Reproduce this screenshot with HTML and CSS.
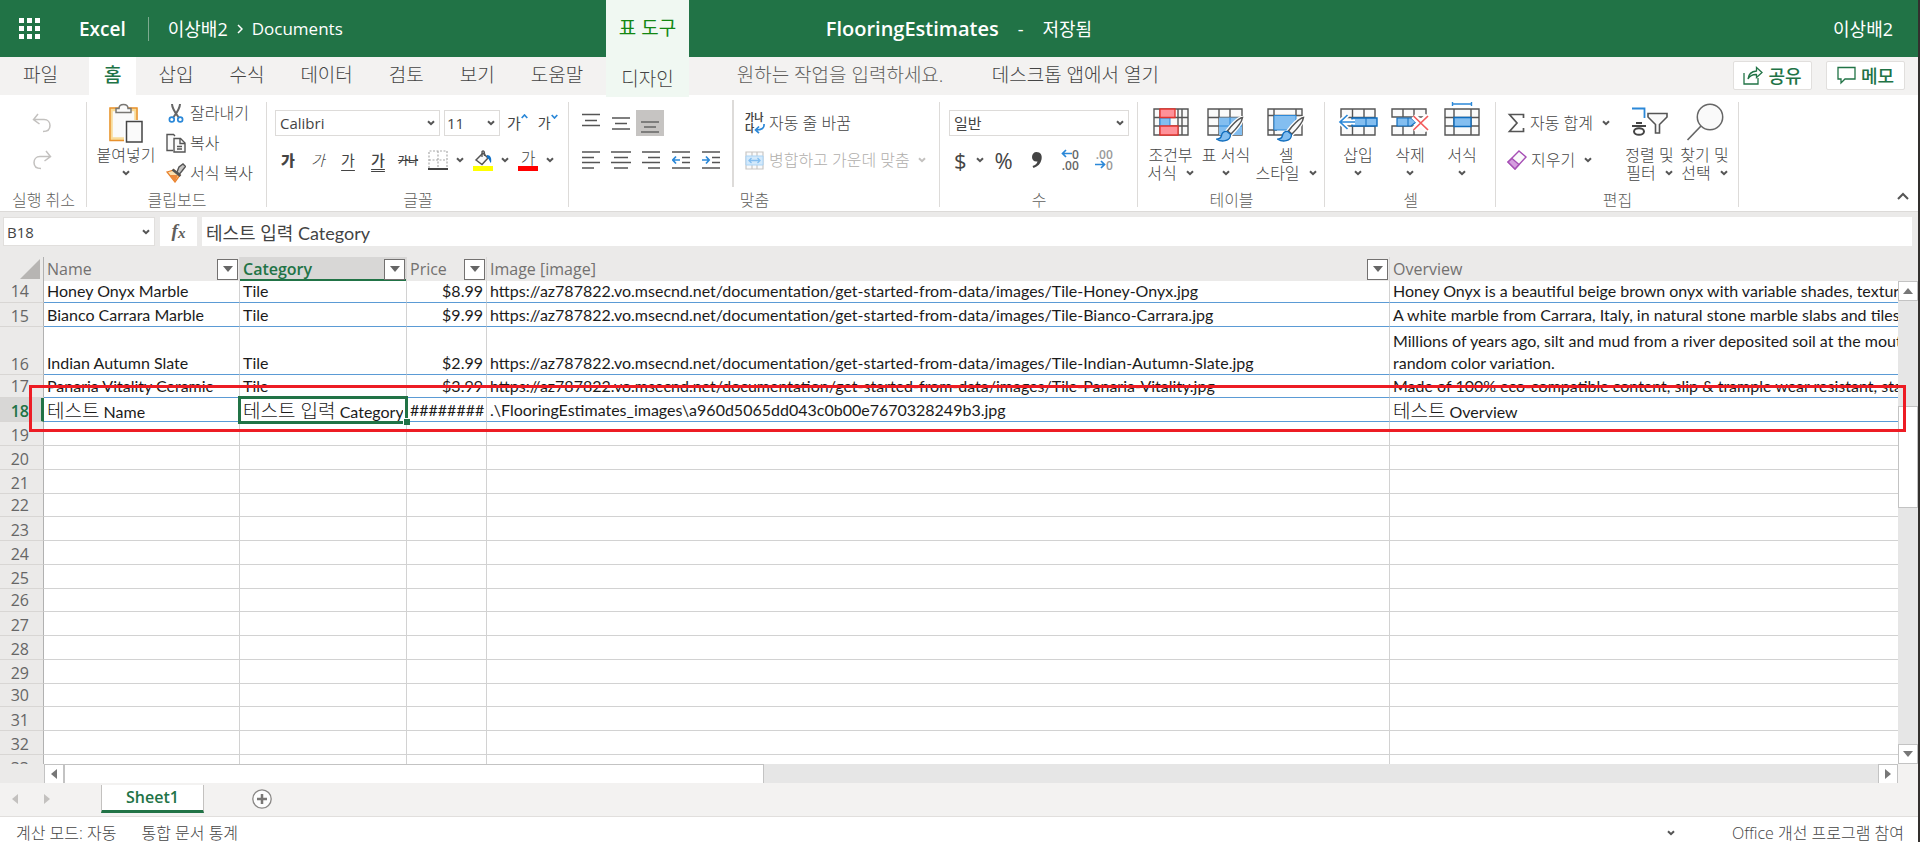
FILE: index.html
```html
<!DOCTYPE html>
<html lang="ko">
<head>
<meta charset="utf-8">
<title>FlooringEstimates - Excel</title>
<link rel="stylesheet" href="styles.css">
</head>
<body>
<svg class="defs" aria-hidden="true">
  <symbol id="chev" viewBox="0 0 8 6"><path d="M1 1.2 4 4.2 7 1.2" fill="none" stroke="currentColor" stroke-width="2"/></symbol>
  <symbol id="tri" viewBox="0 0 10 6"><path d="M0 0H10L5 6Z" fill="currentColor"/></symbol>
  <symbol id="brush" viewBox="0 0 28 26"><path d="M26.500 1.500C22 2.500 15 10 11.500 15L15 18C20 13 26 6 26.500 1.500Z" fill="#fafafa" stroke="#fff" stroke-width="4"/><path d="M26.500 1.500C22 2.500 15 10 11.500 15L15 18C20 13 26 6 26.500 1.500Z" fill="#fafafa" stroke="#555" stroke-width="1.500"/><path d="M11 15.500C7 15 6 17 5.500 19.500 5 22 3 23 .800 23.200 5 26 14.500 26 14.500 18.500Z" fill="#83bef0" stroke="#0f6cbd" stroke-width="1.300"/></symbol>
</svg>

<header class="topbar">
  <div class="brand">
    <button class="waffle" aria-label="앱 시작 관리자"><svg width="21" height="21" viewBox="0 0 21 21" fill="#fff"><path d="M0 0h5v5H0zM8 0h5v5H8zM16 0h5v5h-5zM0 8h5v5H0zM8 8h5v5H8zM16 8h5v5h-5zM0 16h5v5H0zM8 16h5v5H8zM16 16h5v5h-5z"/></svg></button>
    <a class="app" href="#">Excel</a>
    <nav class="crumbs"><a class="owner" href="#">이상배2</a><svg width="6" height="10" viewBox="0 0 6 10"><path d="M1 1 5 5 1 9" fill="none" stroke="#fff" stroke-width="1.500"/></svg><a href="#">Documents</a></nav>
  </div>
  <h1 class="title"><span>FlooringEstimates</span><small>-</small><small>저장됨</small></h1>
  <a class="user" href="#">이상배2</a>
</header>

<nav class="tabs">
  <button class="tab file">파일</button>
  <button class="tab home">홈</button>
  <button class="tab">삽입</button>
  <button class="tab">수식</button>
  <button class="tab">데이터</button>
  <button class="tab">검토</button>
  <button class="tab">보기</button>
  <button class="tab">도움말</button>
  <div class="context"><span class="context-title">표 도구</span><button class="tab">디자인</button></div>
  <input class="tellme" type="text" placeholder="원하는 작업을 입력하세요." aria-label="원하는 작업을 입력하세요.">
  <a class="desktop" href="#">데스크톱 앱에서 열기</a>
  <div class="actions">
    <button class="action"><svg width="20" height="19" viewBox="0 0 20 19" fill="none" stroke="#217346" stroke-width="1.300"><path d="M1 7V18H15V12M5 13C5.500 8 8 5.500 13.500 5V1.500L19 6.500 13.500 11.500V8.500C9.500 8.300 7 9.500 5 13Z"/></svg>공유</button>
    <button class="action"><svg width="19" height="19" viewBox="0 0 19 19" fill="none" stroke="#217346" stroke-width="1.300"><path d="M1 1.500H18V13H8L4 17V13H1Z"/></svg>메모</button>
  </div>
</nav>

<section class="ribbon">
  <div class="group undo">
    <div class="body stack">
      <button class="ico" aria-label="실행 취소"><svg width="20" height="20" viewBox="0 0 20 20" fill="none" stroke="#c3c1bf" stroke-width="1.500"><path d="M6 1 1.500 6.500 7.500 11M1.500 6.500H12C16 6.500 18 9.500 18 12.500 18 16 15.500 18.500 11 18.500"/></svg></button>
      <button class="ico" aria-label="다시 실행"><svg width="20" height="20" viewBox="0 0 20 20" fill="none" stroke="#c3c1bf" stroke-width="1.500"><path d="M14 1 18.500 6.500 12.500 11M18.500 6.500H8C4 6.500 2 9.500 2 12.500 2 16 4.500 18.500 9 18.500"/></svg></button>
    </div>
    <div class="caption">실행 취소</div>
  </div>

  <div class="group clip">
    <div class="body">
      <button class="big paste"><svg width="34" height="40" viewBox="0 0 34 40"><path d="M2 6.500H27V36H2Z" fill="#fafafa" stroke="#f8dc9a" stroke-width="3.500"/><path d="M1 5H28V37.500H1Z" fill="none" stroke="#e8912d" stroke-width="1.400"/><path d="M7 9.500V5.500H10C10 3 11.500 1.500 14.500 1.500S19 3 19 5.500H22V9.500Z" fill="#fafafa" stroke="#797774" stroke-width="1.500"/><path d="M15 17H34V40H15Z" fill="#fff"/><path d="M17.500 18.500H33V39H17.500Z" fill="#fafafa" stroke="#444" stroke-width="1.500"/></svg><span>붙여넣기</span><span><svg class="chev"><use href="#chev"/></svg></span></button>
      <div class="stack tight">
        <button class="row"><svg width="20" height="20" viewBox="0 0 20 20" fill="none"><path d="M6 1C6 5 8.500 9 12.800 14.500M14 1C14 5 11.500 9 7.200 14.500" stroke="#666" stroke-width="2"/><circle cx="5.800" cy="16.500" r="2.400" stroke="#2b88d8" stroke-width="1.700"/><circle cx="14.200" cy="16.500" r="2.400" stroke="#2b88d8" stroke-width="1.700"/></svg>잘라내기</button>
        <button class="row"><svg width="20" height="20" viewBox="0 0 20 20" fill="#fafafa" stroke="#555" stroke-width="1.400"><path d="M7 17.500H1V1.500H7.500L9 3"/><path d="M8 5.500H14.500L19 10V19H8Z"/><path d="M14 5.500V10.500H19M11 13.500H16M11 16H16" fill="none"/></svg>복사</button>
        <button class="row"><svg width="20" height="20" viewBox="0 0 20 20"><path d="M1 9 8 7 14 12 9 19Z" fill="#fce0b0" stroke="#e8822d" stroke-width="1.300"/><path d="M3 12H12L9 19Z" fill="#ed8a3c"/><path d="M6.500 6.500 14.500 13" stroke="#555" stroke-width="2.500"/><path d="M11 9 13 4 17 1 19.500 3.500 16 8 13.500 11Z" fill="#c8c6c4" stroke="#555" stroke-width="1.400"/></svg>서식 복사</button>
      </div>
    </div>
    <div class="caption">클립보드</div>
  </div>

  <div class="group font">
    <div class="body stack">
      <div class="line">
        <label class="combo name"><select aria-label="글꼴"><option>Calibri</option></select><svg class="chev"><use href="#chev"/></svg></label>
        <label class="combo size"><select aria-label="글꼴 크기"><option>11</option></select><svg class="chev"><use href="#chev"/></svg></label>
        <button class="glyph grow" aria-label="글꼴 크게">가<svg width="7" height="5" viewBox="0 0 7 5"><path d="M.700 4 3.500 1 6.300 4" fill="none" stroke="#2b88d8" stroke-width="1.700"/></svg></button>
        <button class="glyph shrink" aria-label="글꼴 작게">가<svg width="7" height="5" viewBox="0 0 7 5"><path d="M.700 1 3.500 4 6.300 1" fill="none" stroke="#2b88d8" stroke-width="1.700"/></svg></button>
      </div>
      <div class="line marks">
        <button class="glyph bold" aria-label="굵게">가</button>
        <button class="glyph italic" aria-label="기울임꼴">가</button>
        <button class="glyph under" aria-label="밑줄">가</button>
        <button class="glyph double" aria-label="이중 밑줄">가</button>
        <button class="glyph strike" aria-label="취소선">가나</button>
        <button class="drop" aria-label="테두리"><svg width="20" height="20" viewBox="0 0 20 20"><path d="M1 18V1H19V18M10 1V18M1 10H19" fill="none" stroke="#aaa" stroke-width="1.200" stroke-dasharray="2 1.500"/><path d="M0 19H20" stroke="#444" stroke-width="2"/></svg><svg class="chev"><use href="#chev"/></svg></button>
        <button class="drop" aria-label="채우기 색"><svg width="20" height="21" viewBox="0 0 20 21"><path d="M0 16H20V21H0Z" fill="#ff0"/><path d="M3 10 10 3 15 8 9 14.500Z" fill="#fafafa" stroke="#555" stroke-width="1.500"/><path d="M9 7V1.500C10 .500 11.500 1 11.500 3V6" fill="none" stroke="#555" stroke-width="1.300"/><path d="M14 5C17.500 5 19 8 18 13 16.500 12 16.500 9 14 7.500Z" fill="#1272c8"/></svg><svg class="chev"><use href="#chev"/></svg></button>
        <button class="drop" aria-label="글꼴 색"><span class="color">가</span><svg class="chev"><use href="#chev"/></svg></button>
      </div>
    </div>
    <div class="caption">글꼴</div>
  </div>

  <div class="group align">
    <div class="body">
      <div class="stack lines">
        <div class="line">
          <button class="ico" aria-label="위쪽 맞춤"><svg width="18" height="20" viewBox="0 0 18 20"><path d="M0 1.500H18M3 7.500H15M0 12.500H18" stroke="#555" stroke-width="1.600"/></svg></button>
          <button class="ico" aria-label="가운데 맞춤"><svg width="18" height="20" viewBox="0 0 18 20"><path d="M0 5H18M3 10.500H15M0 16H18" stroke="#555" stroke-width="1.600"/></svg></button>
          <button class="ico on" aria-label="아래쪽 맞춤"><svg width="18" height="20" viewBox="0 0 18 20"><path d="M0 9H18M3 14H15M0 19H18" stroke="#666" stroke-width="1.600"/></svg></button>
        </div>
        <div class="line">
          <button class="ico" aria-label="왼쪽 맞춤"><svg width="18" height="18" viewBox="0 0 18 18"><path d="M0 1H18M0 6.500H12M0 11.500H18M0 17H12" stroke="#555" stroke-width="1.600"/></svg></button>
          <button class="ico" aria-label="가운데"><svg width="20" height="18" viewBox="0 0 20 18"><path d="M0 1H20M3 6.500H17M0 11.500H20M3 17H17" stroke="#555" stroke-width="1.600"/></svg></button>
          <button class="ico" aria-label="오른쪽 맞춤"><svg width="18" height="18" viewBox="0 0 18 18"><path d="M0 1H18M6 6.500H18M0 11.500H18M6 17H18" stroke="#555" stroke-width="1.600"/></svg></button>
          <button class="ico" aria-label="내어쓰기"><svg width="18" height="18" viewBox="0 0 18 18"><path d="M0 1H18M10 6.500H18M10 11.500H18M0 17H18" stroke="#555" stroke-width="1.600"/><path d="M8 9H1M4 5.500.800 9 4 12.500" fill="none" stroke="#2b88d8" stroke-width="1.700"/></svg></button>
          <button class="ico" aria-label="들여쓰기"><svg width="18" height="18" viewBox="0 0 18 18"><path d="M0 1H18M10 6.500H18M10 11.500H18M0 17H18" stroke="#555" stroke-width="1.600"/><path d="M0 9H7M4 5.500 7.200 9 4 12.500" fill="none" stroke="#2b88d8" stroke-width="1.700"/></svg></button>
        </div>
      </div>
      <div class="stack wrap">
        <button class="row"><span class="wrapicon">가나<br>다<svg width="11" height="10" viewBox="0 0 11 10"><path d="M10 0C10.500 4 8 6 2 6M5 2.500 1.500 6 5 9.200" fill="none" stroke="#2b88d8" stroke-width="1.700"/></svg></span>자동 줄 바꿈</button>
        <button class="row off"><svg width="20" height="19" viewBox="0 0 20 19"><path d="M1 1H18V18H1ZM7 1V5M12 1V5M7 14V18M12 14V18" fill="#fafafa" stroke="#c8c6c4" stroke-width="1.200"/><path d="M1 5H18V14H1Z" fill="#d3e9fb" stroke="#a9d3f5"/><path d="M4 9.500H15M6.500 7 4 9.500 6.500 12M12.500 7 15 9.500 12.500 12" fill="none" stroke="#83bef0" stroke-width="1.300"/></svg>병합하고 가운데 맞춤<svg class="chev"><use href="#chev"/></svg></button>
      </div>
    </div>
    <div class="caption">맞춤</div>
  </div>

  <div class="group number">
    <div class="body stack">
      <label class="combo"><select aria-label="표시 형식"><option>일반</option></select><svg class="chev"><use href="#chev"/></svg></label>
      <div class="line">
        <button class="drop sym"><span>$</span><svg class="chev"><use href="#chev"/></svg></button>
        <button class="sym">%</button>
        <button class="ico" aria-label="쉼표 스타일"><svg width="12" height="19" viewBox="0 0 12 19"><path d="M5.500 1C9.500 1 11.500 4 10.500 8.500 9.800 12.500 7 15.500 2.500 17L1.500 15C4.500 14 6 12.500 6.500 10.500 3 11 1 9 1 6 1 3 3 1 5.500 1Z" fill="#444"/></svg></button>
        <button class="dec" aria-label="자릿수 늘림"><span><svg width="11" height="9" viewBox="0 0 11 9"><path d="M11 4.500H1.500M5 1 1.500 4.500 5 8" fill="none" stroke="#2b88d8" stroke-width="1.700"/></svg>0</span><span>.00</span></button>
        <button class="dec pale" aria-label="자릿수 줄임"><span>.00</span><span><svg width="11" height="9" viewBox="0 0 11 9"><path d="M0 4.500H9.500M6 1 9.500 4.500 6 8" fill="none" stroke="#2b88d8" stroke-width="1.700"/></svg>0</span></button>
      </div>
    </div>
    <div class="caption">수</div>
  </div>

  <div class="group table">
    <div class="body">
      <button class="big"><svg width="36" height="40" viewBox="0 0 36 40"><path d="M1 6H35V32H1ZM1 14.500H35M1 23H35M7 6V32M25 6V32M29 6V32" fill="#fafafa" stroke="#555" stroke-width="1.400"/><path d="M7 15H17V23H7Z" fill="#83bef0" stroke="#2b88d8"/><path d="M7 6H22V14.500H7ZM7 23H25V32H7Z" fill="#ff9199" stroke="#e3342f" stroke-width="1.300"/></svg><span>조건부</span><span>서식 <svg class="chev"><use href="#chev"/></svg></span></button>
      <button class="big"><svg width="38" height="40" viewBox="0 0 38 40"><path d="M1 6H35V32H1ZM1 14.500H35M1 23H35M12 6V32M23 6V32" fill="#fafafa" stroke="#555" stroke-width="1.400"/><path d="M12 14.500H35V32H12Z" fill="#83bef0"/><path d="M12 23H35M23 14.500V32" stroke="#2b88d8"/><svg x="9" y="13" width="28" height="26"><use href="#brush"/></svg></svg><span>표 서식</span><span><svg class="chev"><use href="#chev"/></svg></span></button>
      <button class="big"><svg width="38" height="40" viewBox="0 0 38 40"><path d="M1 6H35V32H1ZM1 12.500H35M7 6V32M29 6V13M1 27H10" fill="#fafafa" stroke="#555" stroke-width="1.400"/><path d="M7 12.500H29V27H7Z" fill="#83bef0" stroke="#2b88d8"/><svg x="10" y="13" width="28" height="26"><use href="#brush"/></svg></svg><span>셀</span><span>스타일 <svg class="chev"><use href="#chev"/></svg></span></button>
    </div>
    <div class="caption">테이블</div>
  </div>

  <div class="group cells">
    <div class="body">
      <button class="big"><svg width="40" height="40" viewBox="0 0 40 40"><path d="M3 6H37V32H3ZM3 14.500H37M3 23H37M14.500 6V32M26 6V32" fill="#fafafa" stroke="#555" stroke-width="1.400"/><path d="M14 15H39V23H14Z" fill="#83bef0" stroke="#0f6cbd" stroke-width="1.400"/><path d="M28 15V23" stroke="#0f6cbd"/><path d="M17 19H3M9.500 12 2 19 9.500 26" fill="none" stroke="#fff" stroke-width="5"/><path d="M17 19H2M9.500 12 2 19 9.500 26" fill="none" stroke="#2b88d8" stroke-width="1.700"/></svg><span>삽입</span><span><svg class="chev"><use href="#chev"/></svg></span></button>
      <button class="big"><svg width="38" height="40" viewBox="0 0 38 40"><path d="M1 6H35V14H1ZM1 23H35V32H1ZM12 6V14M23 6V14M12 23V32M23 23V32" fill="#fafafa" stroke="#555" stroke-width="1.400"/><path d="M6 15H20L25 19 20 23H6Z" fill="#83bef0" stroke="#0f6cbd" stroke-width="1.200"/><path d="M17 15V23" stroke="#0f6cbd"/><path d="M22.500 13 37 27M37 13 22.500 27" stroke="#fff" stroke-width="6"/><path d="M22.500 13 37 27M37 13 22.500 27" stroke="#f25a5a" stroke-width="1.700"/></svg><span>삭제</span><span><svg class="chev"><use href="#chev"/></svg></span></button>
      <button class="big"><svg width="36" height="40" viewBox="0 0 36 40"><path d="M1 6H35V32H1ZM1 14.500H35M1 23H35M10 6V32M27 6V32" fill="#fafafa" stroke="#555" stroke-width="1.400"/><path d="M10 14.500H27V23.500H10Z" fill="#83bef0" stroke="#0f6cbd" stroke-width="1.400"/><path d="M8.500 1H27.500M8.500-1V3M27.500-1V3" stroke="#2b88d8" stroke-width="1.400"/></svg><span>서식</span><span><svg class="chev"><use href="#chev"/></svg></span></button>
    </div>
    <div class="caption">셀</div>
  </div>

  <div class="group edit">
    <div class="body">
      <div class="stack sums">
        <button class="row"><svg width="19" height="20" viewBox="0 0 19 20"><path d="M16.500 5V1.500H2.500L10 10 2.500 18.500H16.500V15" fill="none" stroke="#555" stroke-width="1.700"/></svg>자동 합계<svg class="chev"><use href="#chev"/></svg></button>
        <button class="row"><svg width="20" height="20" viewBox="0 0 20 20"><path d="M12 1 19 7 8 19 1 12Z" fill="#fafafa" stroke="#a64fb5" stroke-width="1.400"/><path d="M5 8.500 12 14.500 8 19 1 12Z" fill="#d59ddf" stroke="#a64fb5" stroke-width="1.400"/></svg>지우기<svg class="chev"><use href="#chev"/></svg></button>
      </div>
      <button class="big"><svg width="38" height="40" viewBox="0 0 38 40" fill="none"><path d="M1 5.500H13.500V15" stroke="#2b88d8" stroke-width="1.800"/><path d="M5 20H11M1 23H15" stroke="#444" stroke-width="2"/><ellipse cx="8" cy="28.500" rx="5" ry="3.300" stroke="#444" stroke-width="2"/><path d="M17 10.500H36V14L28.500 21.500V30H24.500V21.500L17 14Z" fill="#fafafa" stroke="#555" stroke-width="1.600"/></svg><span>정렬 및</span><span>필터 <svg class="chev"><use href="#chev"/></svg></span></button>
      <button class="big"><svg width="38" height="40" viewBox="0 0 38 40"><circle cx="24" cy="14" r="12.700" fill="#fafafa" stroke="#666" stroke-width="1.500"/><path d="M15 23 1.500 37" stroke="#666" stroke-width="1.700"/></svg><span>찾기 및</span><span>선택 <svg class="chev"><use href="#chev"/></svg></span></button>
    </div>
    <div class="caption">편집</div>
  </div>
  <button class="collapse" aria-label="리본 축소"><svg width="12" height="8" viewBox="0 0 12 8"><path d="M1 7 6 2 11 7" fill="none" stroke="#555" stroke-width="2"/></svg></button>
</section>

<div class="formula">
  <label class="namebox"><input type="text" value="B18" aria-label="이름 상자"><svg class="chev"><use href="#chev"/></svg></label>
  <button class="fx">f<sub>x</sub></button>
  <input class="content" type="text" value="테스트 입력 Category" aria-label="수식 입력줄">
</div>

<main class="sheet">
  <div class="viewport">
    <table class="grid">
      <colgroup><col class="c-row"><col class="c-name"><col class="c-cat"><col class="c-price"><col class="c-img"><col></colgroup>
      <thead>
        <tr>
          <th class="corner"><svg width="20" height="20" viewBox="0 0 20 20"><path d="M20 0V20H0Z" fill="#b7b5b3"/></svg></th>
          <th><div>Name<button class="filter" aria-label="필터"><svg><use href="#tri"/></svg></button></div></th>
          <th class="sel"><div>Category<button class="filter" aria-label="필터"><svg><use href="#tri"/></svg></button></div></th>
          <th><div>Price<button class="filter" aria-label="필터"><svg><use href="#tri"/></svg></button></div></th>
          <th><div>Image [image]<button class="filter" aria-label="필터"><svg><use href="#tri"/></svg></button></div></th>
          <th><div>Overview</div></th>
        </tr>
      </thead>
      <tbody>
        <tr class="data short"><th>14</th><td>Honey Onyx Marble</td><td>Tile</td><td class="num">$8.99</td><td>https://az787822.vo.msecnd.net/documentation/get-started-from-data/images/Tile-Honey-Onyx.jpg</td><td>Honey Onyx is a beautiful beige brown onyx with variable shades, textures</td></tr>
        <tr class="data"><th>15</th><td>Bianco Carrara Marble</td><td>Tile</td><td class="num">$9.99</td><td>https://az787822.vo.msecnd.net/documentation/get-started-from-data/images/Tile-Bianco-Carrara.jpg</td><td>A white marble from Carrara, Italy, in natural stone marble slabs and tiles</td></tr>
        <tr class="data tall"><th>16</th><td>Indian Autumn Slate</td><td>Tile</td><td class="num">$2.99</td><td>https://az787822.vo.msecnd.net/documentation/get-started-from-data/images/Tile-Indian-Autumn-Slate.jpg</td><td>Millions of years ago, silt and mud from a river deposited soil at the mouth<br>random color variation.</td></tr>
        <tr class="data less"><th>17</th><td>Panaria Vitality Ceramic</td><td>Tile</td><td class="num">$3.99</td><td>https://az787822.vo.msecnd.net/documentation/get-started-from-data/images/Tile-Panaria-Vitality.jpg</td><td>Made of 100% eco-compatible content, slip &amp; trample wear resistant, stain</td></tr>
        <tr class="data current"><th>18</th><td class="ko"><div><b>테스트</b> Name</div></td><td class="ko active"><div><b>테스트 입력</b> Category</div></td><td class="num">########</td><td>.\FlooringEstimates_images\a960d5065dd043c0b00e7670328249b3.jpg</td><td class="ko"><div><b>테스트</b> Overview</div></td></tr>
        <tr><th>19</th><td></td><td></td><td></td><td></td><td></td></tr>
        <tr><th>20</th><td></td><td></td><td></td><td></td><td></td></tr>
        <tr><th>21</th><td></td><td></td><td></td><td></td><td></td></tr>
        <tr class="less"><th>22</th><td></td><td></td><td></td><td></td><td></td></tr>
        <tr><th>23</th><td></td><td></td><td></td><td></td><td></td></tr>
        <tr><th>24</th><td></td><td></td><td></td><td></td><td></td></tr>
        <tr><th>25</th><td></td><td></td><td></td><td></td><td></td></tr>
        <tr class="less"><th>26</th><td></td><td></td><td></td><td></td><td></td></tr>
        <tr><th>27</th><td></td><td></td><td></td><td></td><td></td></tr>
        <tr><th>28</th><td></td><td></td><td></td><td></td><td></td></tr>
        <tr><th>29</th><td></td><td></td><td></td><td></td><td></td></tr>
        <tr class="less"><th>30</th><td></td><td></td><td></td><td></td><td></td></tr>
        <tr><th>31</th><td></td><td></td><td></td><td></td><td></td></tr>
        <tr><th>32</th><td></td><td></td><td></td><td></td><td></td></tr>
        <tr><th>33</th><td></td><td></td><td></td><td></td><td></td></tr>
      </tbody>
    </table>
  </div>
  <div class="vscroll">
    <button aria-label="위로"><svg class="up"><use href="#tri"/></svg></button>
    <div class="vtrack"><div class="vthumb"></div></div>
    <button aria-label="아래로"><svg><use href="#tri"/></svg></button>
  </div>
  <div class="highlight"></div>
</main>

<div class="hscroll">
  <button aria-label="왼쪽으로"><svg class="left"><use href="#tri"/></svg></button>
  <div class="htrack"><div class="hthumb"></div></div>
  <button aria-label="오른쪽으로"><svg class="right"><use href="#tri"/></svg></button>
</div>

<nav class="sheets">
  <button class="nav" aria-label="이전 시트"><svg class="left"><use href="#tri"/></svg></button>
  <button class="nav" aria-label="다음 시트"><svg class="right"><use href="#tri"/></svg></button>
  <button class="sheet-tab">Sheet1</button>
  <button class="add" aria-label="새 시트"><svg width="20" height="20" viewBox="0 0 20 20"><circle cx="10" cy="10" r="9.200" fill="#fdfdfd" stroke="#8a8886" stroke-width="1.300"/><path d="M10 5V15M5 10H15" stroke="#797775" stroke-width="2.500"/></svg></button>
</nav>

<footer class="status">
  <span>계산 모드: 자동</span><span>통합 문서 통계</span>
  <svg class="chev"><use href="#chev"/></svg>
  <a href="#">Office 개선 프로그램 참여</a>
</footer>
</body>
</html>
```

FILE: styles.css
```css
* { box-sizing: border-box; }
body {
  margin: 0; min-height: 100vh; height: 100vh; display: flex; flex-direction: column; overflow: hidden;
  border-right: 2px solid #33302e; background: #fff; color: #444;
  font: 16px/18px "Open Sans", "Noto Sans CJK KR", sans-serif;
}
button, input, select { font: inherit; color: inherit; border: 0; margin: 0; padding: 0; background: none; border-radius: 0; }
button { white-space: nowrap; }
a { color: inherit; text-decoration: none; }
svg { display: block; flex: none; }
.defs { position: absolute; width: 0; height: 0; }
.chev { width: 8px; height: 6px; color: #555; }

.topbar { flex: none; height: 57px; display: grid; grid-template-columns: 1fr auto 1fr; align-items: center; background: #217346; color: #fff; font-size: 18px; line-height: 24px; }
.brand { display: flex; align-items: center; }
.waffle { margin: 0 39px 0 19px; }
.app { font-size: 19px; font-weight: 600; padding-right: 22px; border-right: 1px solid #7dab90; }
.crumbs { display: flex; align-items: center; gap: 9px; padding-left: 19px; font-size: 17px; }
.owner { font-size: 18px; }
.title { margin: 0; display: flex; gap: 19px; font-size: 20px; font-weight: 600; }
.title small { font-size: 18px; font-weight: 400; }
.user { justify-self: end; padding-right: 25px; font-size: 18px; }

.tabs { flex: none; height: 38px; display: flex; align-items: stretch; background: #f3f2f1; font-size: 19px; line-height: 26px; font-weight: 300; }
.tab { padding: 0 18px 2px; }
.tab.file { padding: 0 31px 2px 23px; }
.tab.home { padding: 0 15px 2px; margin-right: 4px; background: #fff; color: #217346; font-weight: 500; }
.context { position: relative; display: flex; margin: 0 0 -2px 5px; background: #f0f8f2; z-index: 1; }
.context .tab { padding: 4px 15px 0; }
.context-title { position: absolute; left: 0; right: 0; bottom: 100%; height: 57px; padding-top: 15px; text-align: center; background: #f0f8f2; color: #128712; font-weight: 400; font-size: 19px; }
.tellme { width: 230px; margin-left: 48px; padding-bottom: 2px; }
.tellme::placeholder { color: #605e5c; opacity: 1; }
.desktop { margin: 5px 0 0 25px; }
.actions { margin-left: auto; display: flex; gap: 14px; align-items: flex-start; padding: 4px 13px 0 0; }
.action { width: 79px; height: 29px; display: flex; align-items: center; justify-content: center; gap: 5px; background: #fff; border: 1px solid #e1dfdd; border-radius: 2px; color: #217346; font-size: 18px; font-weight: 500; }

.ribbon { flex: none; display: flex; border-bottom: 1px solid #dcdad8; height: 117px; font-weight: 300; }
.group { flex: none; position: relative; display: flex; flex-direction: column; }
.group::after { content: ""; position: absolute; right: 0; top: 7px; bottom: 4px; border-right: 1px solid #dddbd9; }
.body { display: flex; flex: 1; align-items: flex-start; }
.caption { height: 21px; line-height: 21px; text-align: center; color: #605e5c; }
.stack { display: flex; flex-direction: column; padding-top: 15px; gap: 11px; align-items: flex-start; }
.line { display: flex; align-items: center; height: 26px; }
.row { display: flex; align-items: center; gap: 4px; height: 26px; }
.stack.tight { padding-top: 3px; gap: 0; }
.tight .row { height: 30px; }
.ico { height: 26px; display: flex; align-items: center; justify-content: center; }
.big { display: flex; flex-direction: column; align-items: center; padding-top: 8px; }
.big > svg { margin-bottom: 3px; overflow: visible; }
.big span { height: 18px; display: flex; align-items: center; gap: 9px; }
.drop { display: flex; align-items: center; gap: 9px; }
.undo { width: 87px; }
.undo .ico { margin-right: 3px; }
.body.stack { align-items: stretch; }
.clip { width: 180px; }
.paste { width: 78px; margin-right: 1px; }
.font { width: 302px; }
.font .body { padding-left: 8px; }
.combo { position: relative; display: block; }
.combo select { width: 100%; height: 26px; padding: 0 4px; border: 1px solid #dddbd9; background: #fff; appearance: none; color: #444; font-weight: 400; font-size: 15px; }
.combo .chev { position: absolute; right: 5px; top: 10px; }
.combo.name { width: 165px; margin-right: 4px; }
.combo.size { width: 56px; margin-right: 7px; }
.combo.size select { padding: 0 2px; }
.glyph { display: flex; font-size: 15px; font-weight: 400; }
.grow { margin-right: 10px; }
.shrink { font-size: 14px; }
.marks { padding-left: 6px; }
.marks .glyph { justify-content: center; width: 30px; line-height: 19px; }
.marks .glyph:first-child { margin-left: -8px; }
.bold { font-weight: 900; }
.italic { font-style: italic; font-weight: 300; }
.under { text-decoration: underline; text-underline-offset: 4px; }
.double { text-decoration: underline double; text-underline-offset: 3px; font-weight: 500; }
.marks .strike { text-decoration: line-through; font-size: 11px; margin-right: 5px; font-weight: 500; }
.marks .drop { gap: 8px; margin-right: 9px; }
.color { width: 20px; height: 21px; line-height: 16px; border-bottom: 5px solid red; }
.align { width: 371px; }
.align .lines { padding-left: 7px; }
.align .ico { width: 30px; }
.align .ico.on { width: 28px; background: #c6c4c2; }
.wrap { padding-left: 11px; margin-left: 6px; border-left: 2px solid #dddbd9; height: 87px; margin-top: 5px; padding-top: 10px; }
.off { color: #b0aeac; }
.off .chev { color: #c3c1bf; margin-left: 4px; }
.wrapicon { width: 20px; font-size: 10px; line-height: 11px; font-weight: 700; text-align: left; position: relative; }
.wrapicon svg { position: absolute; right: 0; bottom: 0; }
.number { width: 198px; }
.number .body { padding: 15px 9px 0; }
.number .line { padding-left: 5px; }
.sym { font-size: 22px; font-weight: 400; line-height: 26px; }
.sym .chev { margin-right: 11px; }
.number .ico { margin: 0 16px 0 18px; }
.dec { display: flex; flex-direction: column; width: 20px; margin-right: 14px; font-size: 12px; line-height: 11px; font-weight: 600; align-items: flex-end; color: #666; }
.dec span { display: flex; }
.pale { color: #999; }
.table { width: 187px; }
.table .body { padding-left: 9px; }
.table .big { width: 47px; margin-right: 4px; }
.table .big + .big { width: 56px; margin-right: 2px; }
.table .big:last-child { width: 60px; }
.cells { width: 171px; }
.cells .body { padding-left: 7px; }
.cells .big { width: 52px; }
.edit { width: 243px; }
.edit .sums { width: 126px; padding-left: 11px; }
.edit .row .chev { margin-left: 5px; }
.edit .big { width: 55px; }
.collapse { margin: auto 9px 11px auto; }

.formula { flex: none; display: flex; gap: 5px; padding: 5px 6px 11px 3px; background: #ebeae9; height: 45px; }
.namebox { position: relative; width: 152px; }
.namebox input { width: 100%; height: 29px; background: #fff; padding-left: 3px; font-size: 15px; border: 1px solid #e1dfdd; }
.namebox .chev { position: absolute; right: 5px; top: 12px; }
.fx { width: 37px; background: #fff; font: italic bold 19px/24px "Liberation Serif", serif; color: #605e5c; }
.fx sub { font-size: 15px; vertical-align: -1px; }
.content { flex: 1; background: #fff; padding: 0 4px; font-size: 18px; font-family: Lato, "Noto Sans CJK KR", sans-serif; }

.sheet { flex: 1; min-height: 0; display: flex; position: relative; background: #ebeae9; }
.viewport { flex: 1; min-width: 0; overflow: hidden; }
.grid { width: 100%; table-layout: fixed; border-collapse: separate; border-spacing: 0; font: 16px/22px Lato, "Noto Sans CJK KR", sans-serif; color: #1b1b1b; }
.c-row { width: 44px; } .c-name { width: 196px; } .c-cat { width: 167px; } .c-price { width: 80px; } .c-img { width: 903px; }
.grid td { height: 24px; padding: 0 3px; background: #fff; border: solid #d2d2d2; border-width: 0 1px 1px 0; vertical-align: bottom; white-space: nowrap; overflow: hidden; }
.grid td:last-child { border-right: 0; }
.grid .data td { border-bottom-color: #5b9bd5; }
.grid tbody th { padding: 0 14px 0 0; font: 16px/20px "Open Sans", sans-serif; color: #666; vertical-align: bottom; border: solid #d8d6d4; border-width: 0 0 1px; border-right: 1px solid #b1b1b1; text-align: right; overflow: hidden; }
.grid thead th { padding: 0; height: 24px; text-align: left; font: 16px/22px "Open Sans", sans-serif; color: #737170; border-right: 1px solid #dbd9d8; }
.grid thead th:last-child { border-right: 0; }
.grid thead div { display: flex; justify-content: space-between; align-items: center; padding: 0 1px 0 3px; height: 24px; }
.grid thead th.corner { padding-left: 20px; border-right-color: #b1b1b1; }
.grid thead th.sel { background: #d8d7d6; color: #217346; font-weight: 600; box-shadow: inset 0 -2px #217346; }
.filter { width: 21px; height: 21px; display: flex; align-items: center; justify-content: center; background: #fff; border: 1px solid #737170; color: #666; }
.filter svg, .vscroll svg, .hscroll svg, .nav svg { width: 10px; height: 6px; }
.grid .num { text-align: right; }
.grid .short > * { height: 22px; line-height: 20px; padding-bottom: 1px; }
.grid .less > * { height: 23px; line-height: 20px; padding-bottom: 1px; }
.grid .tall > * { height: 48px; }
.grid .current th { background: #d8d7d6; color: #217346; font-weight: 600; border-right: 3px solid #217346; padding-right: 12px; }
.grid .ko div { height: 23px; line-height: 27px; overflow: hidden; }
.ko b { font-size: 19px; line-height: 20px; font-weight: 300; }
.grid .active { position: relative; overflow: visible; }
.active::before { content: ""; position: absolute; inset: -2px -2px -3px -2px; border: 3px solid #217346; }
.active::after { content: ""; position: absolute; right: -4px; bottom: -4px; width: 6px; height: 6px; background: #217346; border: solid #fff; border-width: 1px 0 0 1px; }
.highlight { position: absolute; left: 29px; right: 12px; top: 128px; height: 47px; border: 3px solid #ed1c24; pointer-events: none; }
.vscroll { width: 20px; margin-top: 24px; display: flex; flex-direction: column; background: #e6e6e6; }
.vscroll button, .hscroll button { width: 20px; height: 20px; display: flex; align-items: center; justify-content: center; background: #fff; border: 1px solid #c3c3c3; color: #777; flex: none; }
.vtrack { flex: 1; padding-top: 105px; }
.vthumb { height: 102px; background: #fff; border: 1px solid #c3c3c3; }
.up { transform: rotate(180deg); } .left { transform: rotate(90deg); } .right { transform: rotate(-90deg); }
.hscroll { flex: none; display: flex; height: 19px; padding: 0 20px 0 44px; background: linear-gradient(90deg, #ebeae9 44px, #f3f2f1 44px); }
.hscroll button { height: 19px; border-bottom: 0; }
.htrack { flex: 1; background: #e6e6e6; }
.hthumb { width: 38.6%; height: 19px; background: #fff; border: 1px solid #c3c3c3; border-bottom: 0; }
.sheets { flex: none; height: 34px; display: flex; align-items: flex-start; background: #f3f2f1; border-bottom: 1px solid #e1dfdd; padding: 2px 0 0 10px; }
.nav { color: #c3c1bf; height: 27px; width: 10px; margin-right: 22px; }
.sheet-tab { width: 103px; height: 28px; margin: 0 48px 0 27px; padding-bottom: 2px; background: #fff; border: 1px solid #c3c1bf; border-top: 0; border-bottom: 3px solid #217346; color: #217346; font-weight: 600; font-size: 16px; }
.add { margin-top: 4px; }
.status { flex: none; height: 25px; display: flex; align-items: center; gap: 25px; padding: 6px 14px 0 16px; font-weight: 300; line-height: 18px; }
.status .chev { margin-left: auto; }
.status a { margin-left: 32px; }
```
